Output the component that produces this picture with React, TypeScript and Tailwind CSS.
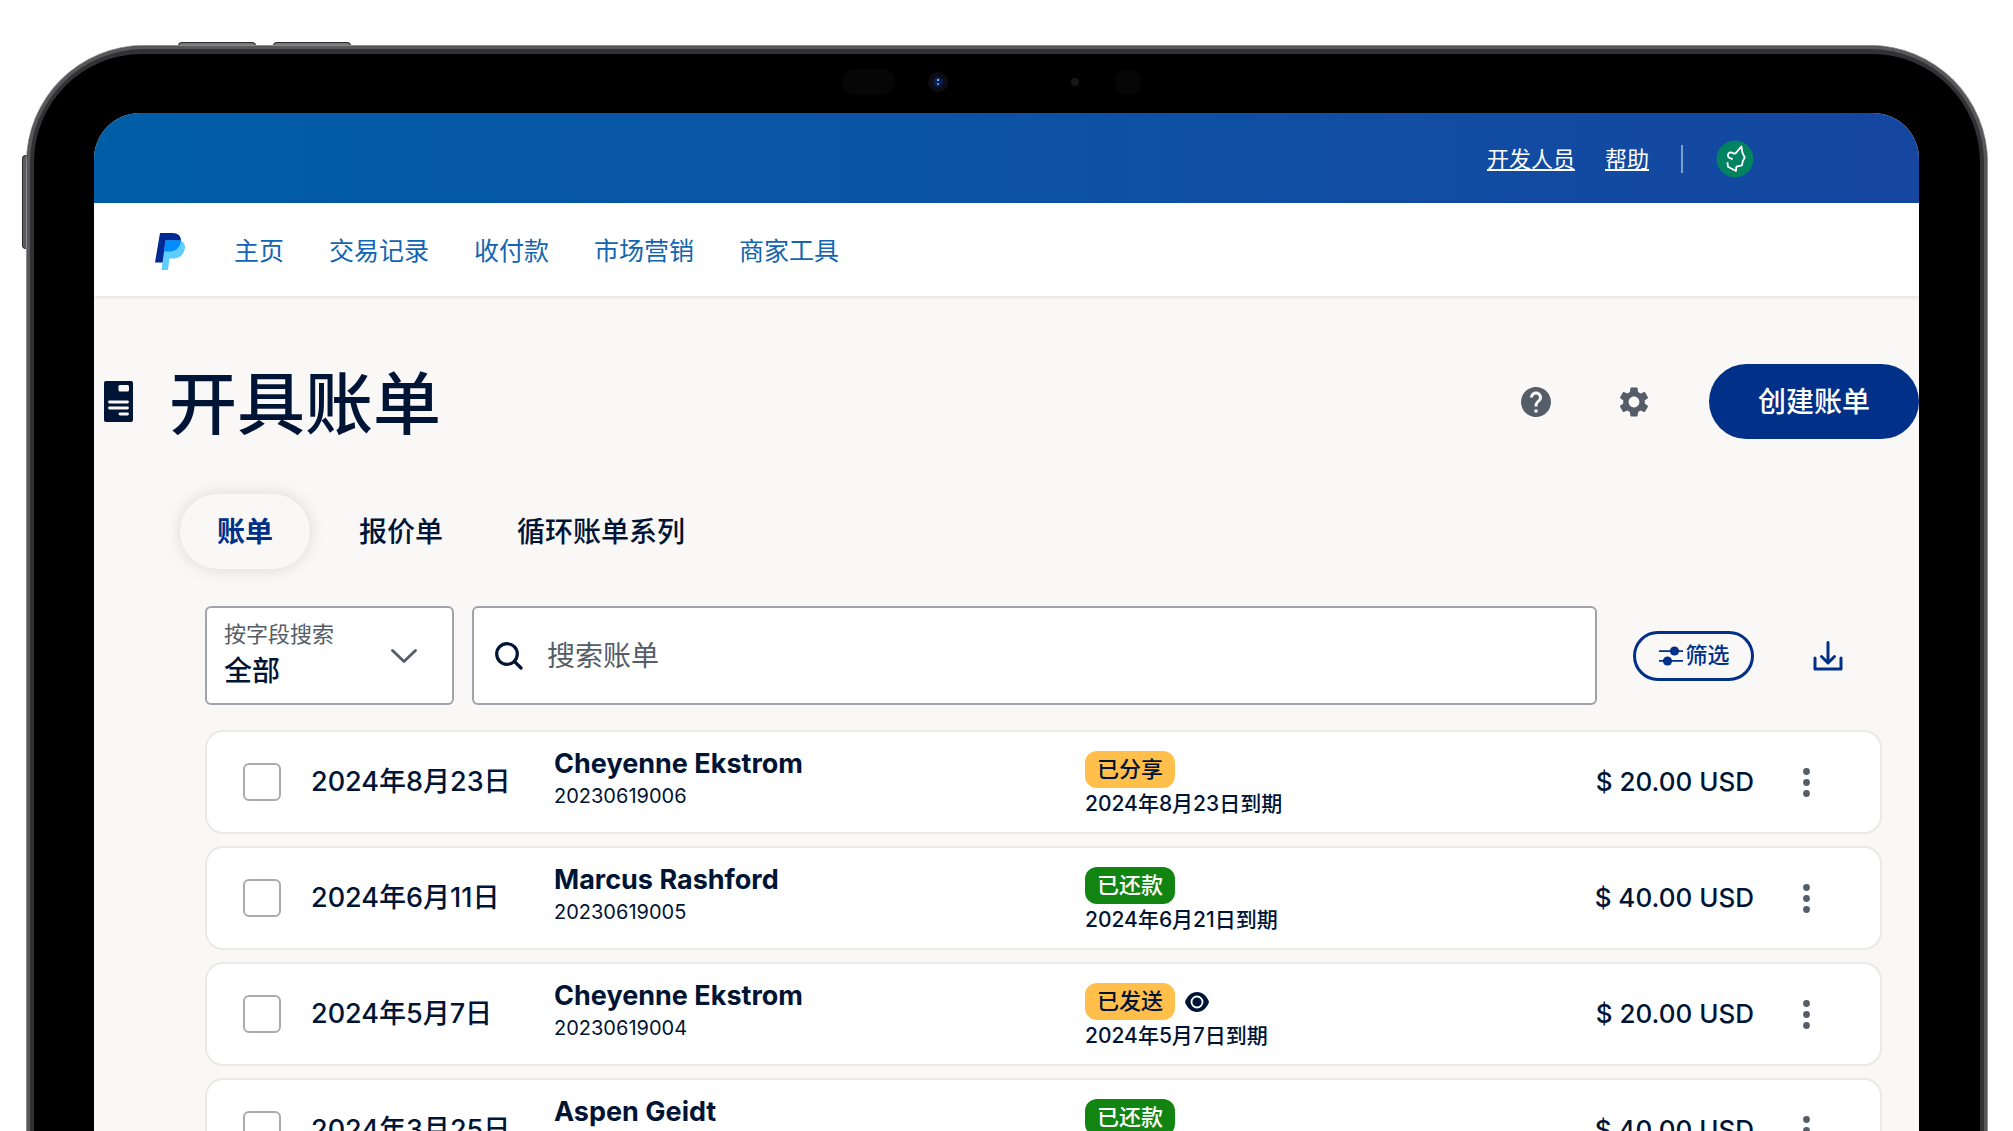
import { useState } from 'react';
import { MdHelp, MdSettings } from 'react-icons/md';

interface Invoice {
  date: string;
  name: string;
  number?: string;
  status: '已分享' | '已还款' | '已发送';
  due?: string;
  viewed?: boolean;
  amount: string;
}

const NAV_ITEMS = ['主页', '交易记录', '收付款', '市场营销', '商家工具'];
const TABS = ['账单', '报价单', '循环账单系列'];

const INVOICES: Invoice[] = [
  { date: '2024年8月23日', name: 'Cheyenne Ekstrom', number: '20230619006', status: '已分享', due: '2024年8月23日到期', amount: '$ 20.00 USD' },
  { date: '2024年6月11日', name: 'Marcus Rashford', number: '20230619005', status: '已还款', due: '2024年6月21日到期', amount: '$ 40.00 USD' },
  { date: '2024年5月7日', name: 'Cheyenne Ekstrom', number: '20230619004', status: '已发送', due: '2024年5月7日到期', viewed: true, amount: '$ 20.00 USD' },
  { date: '2024年3月25日', name: 'Aspen Geidt', status: '已还款', amount: '$ 40.00 USD' },
];

function PayPalLogo() {
  return (
    <svg viewBox="0 0 30 37" className="w-[30px] h-[37px]" aria-hidden="true">
      <path d="M5 0h12.500C23 0 26 3 26 7.500 25.500 14 21 18.500 14.500 18.500H10L8.500 29.500H0z" fill="#002991" />
      <path d="M10.500 7.500h12.500c4.500 0 7 2.700 7 6.500-.5 7-5 11.500-11.500 11.500h-4L13 37H6.500z" fill="#60cdff" />
      <path d="M10.500 7.500H26C25.500 14 21 18.500 14.500 18.500H9z" fill="#008cff" />
    </svg>
  );
}

function Avatar() {
  return (
    <svg viewBox="0 0 38 38" className="w-[38px] h-[38px]" aria-hidden="true">
      <circle cx="19" cy="19" r="18.500" fill="#018362" />
      <path
        d="M16.500 19.500L15.500 18.500C13 18.500 11.500 16.500 12 14.500c.5-1.800 2.500-2.400 4-1.800 1.500.9 2.400 1 3.500.6L25.400 6.500l1 6.200 2.300 4.800-2 3.800-.7 4-5.600 1.400-.4 4.300-8-4.300-.6-4.500"
        fill="none"
        stroke="#fff"
        strokeWidth="1.800"
        strokeLinejoin="round"
      />
    </svg>
  );
}

function InvoiceIcon() {
  return (
    <svg viewBox="0 0 29 41" className="w-[29px] h-[41px]" aria-hidden="true">
      <rect width="29" height="41" rx="2" fill="#001435" />
      <rect x="14.500" y="4" width="10.500" height="6.500" rx="1.500" fill="#faf8f5" />
      <path d="M5.500 21h18M5.500 27h18M16 33h7.500" stroke="#faf8f5" strokeWidth="2.800" strokeLinecap="round" />
    </svg>
  );
}

function StatusBadge({ status }: { status: Invoice['status'] }) {
  const color = status === '已还款' ? 'bg-[#118412] text-white' : 'bg-[#ffbf4a] text-[#001435]';
  return <span className={`inline-flex items-center h-[37px] px-3 rounded-xl text-[22px] font-medium ${color}`}>{status}</span>;
}

/** 平板外框：边框、侧键与前置摄像头 */
function Device({ children }: { children: React.ReactNode }) {
  return (
    <div className="relative flex-1 flex flex-col min-h-0 mt-[45px] ml-[26px] mr-[25px]">
      <div className="absolute -top-[3px] left-[152px] w-[78px] h-2 rounded-t-sm bg-[#77777a] border-t border-x border-[#2d2d2f]" />
      <div className="absolute -top-[3px] left-[247px] w-[78px] h-2 rounded-t-sm bg-[#77777a] border-t border-x border-[#2d2d2f]" />
      <div className="absolute top-[110px] -left-1 w-2 h-[94px] rounded-l-sm bg-[#5d5d60] border-y border-l border-[#2d2d2f]" />
      <div className="relative flex-1 flex flex-col min-h-0 rounded-t-[118px] border-t border-x border-[#8b8d8c] bg-[#333134]">
        <div className="flex-1 flex flex-col min-h-0 rounded-t-[117px] border-t-[3px] border-x-[3px] border-[#58585a]">
          <div className="flex-1 flex flex-col min-h-0 mt-[5px] mx-1 pl-[60px] pr-[61px] rounded-t-[108px] bg-black">
            <div className="flex items-center justify-center h-[59px] pb-1">
              <div className="w-[53px] h-[26px] rounded-full bg-[#060606]" />
              <div className="ml-[33px] flex items-center justify-center size-5 rounded-full bg-[#0d0c14]">
                <div className="flex flex-col items-center justify-center gap-0.5 size-2.5 rounded-full bg-[#0b1f4d]">
                  <span className="size-0.5 bg-[#7fb2ff]" />
                  <span className="size-0.5 bg-[#4c8df0]" />
                </div>
              </div>
              <div className="ml-[123px] size-2 rounded-full bg-[#17171a]" />
              <div className="ml-9 mr-[30px] size-[26px] rounded-full bg-[#060606]" />
            </div>
            {children}
          </div>
        </div>
      </div>
    </div>
  );
}

function InvoiceRow({ invoice, index }: { invoice: Invoice; index: number }) {
  const cell = 'h-[104px] p-0 bg-white border-y-2 border-[#e9e9e8]';
  return (
    <tr>
      <td className={`${cell} border-l-2 rounded-l-[18px] pl-9`}>
        <input
          type="checkbox"
          aria-label={`选择账单 ${index + 1}`}
          className="block size-[38px] appearance-none rounded-md border-2 border-[#a9abae] bg-white checked:bg-[#003087]"
        />
      </td>
      <td className={`${cell} text-[27px] leading-9 font-medium whitespace-nowrap`}>{invoice.date}</td>
      <td className={`${cell} align-top`}>
        <div className="mt-3.5 text-[27px] leading-9 font-bold">{invoice.name}</div>
        <div className="text-[20px] leading-7">{invoice.number}</div>
      </td>
      <td className={`${cell} align-top`}>
        <div className="mt-[19px] flex items-center gap-2.5">
          <StatusBadge status={invoice.status} />
          {invoice.viewed && (
            <svg viewBox="0 0 24 20" className="w-6 h-5" role="img" aria-label="已查看">
              <path d="M12 0c5.500 0 10 4 12 10-2 6-6.500 10-12 10S2 16 0 10C2 4 6.500 0 12 0z" fill="#001435" />
              <circle cx="12" cy="10" r="5.500" fill="none" stroke="#fff" strokeWidth="1.800" />
            </svg>
          )}
        </div>
        <div className="text-[21px] leading-8 font-medium">{invoice.due}</div>
      </td>
      <td className={`${cell} text-right text-[26px] leading-9 font-medium whitespace-nowrap`}>{invoice.amount}</td>
      <td className={`${cell} border-r-2 rounded-r-[18px] pl-8`}>
        <button type="button" aria-label="更多操作" className="flex w-10 h-12 items-center justify-center">
          <svg viewBox="0 0 7 29" className="w-[7px] h-[29px]" fill="#545d68">
            <circle cx="3.500" cy="3.500" r="3.400" />
            <circle cx="3.500" cy="14.500" r="3.400" />
            <circle cx="3.500" cy="25.500" r="3.400" />
          </svg>
        </button>
      </td>
    </tr>
  );
}

export default function App() {
  const [activeTab, setActiveTab] = useState(TABS[0]);

  return (
    <div className="h-screen flex flex-col overflow-hidden bg-white text-[#001435] font-['Inter','Noto_Sans_CJK_SC',sans-serif]">
      <Device>
        <div className="flex-1 min-h-0 overflow-hidden rounded-t-[46px] bg-[#faf8f6]">
          {/* 顶部工具条 */}
          <header className="flex items-center justify-end h-[90px] pt-0.5 pr-[165px] bg-linear-to-r from-[#005ea6] to-[#1546a0] text-white text-[22px]">
            <a href="#developer" className="underline underline-offset-2">开发人员</a>
            <a href="#help" className="ml-[30px] underline underline-offset-2">帮助</a>
            <span className="ml-8 mr-[33px] w-0.5 h-7 bg-white/45" />
            <Avatar />
          </header>

          {/* 主导航 */}
          <nav className="relative flex items-center h-[93px] pt-1 pl-[61px] bg-white shadow-[0_1px_4px_rgba(0,0,0,0.12)]">
            <a href="#home" aria-label="PayPal"><PayPalLogo /></a>
            <div className="ml-[49px] flex gap-[45px] text-[25px] text-[#1265b0]">
              {NAV_ITEMS.map((item) => (
                <a key={item} href={`#${item}`}>{item}</a>
              ))}
            </div>
          </nav>

          <main>
            <div className="mt-[68px] flex items-center h-[75px] pl-2.5">
              <InvoiceIcon />
              <h1 className="ml-9 pt-1 text-[68px] leading-[76px] font-medium">开具账单</h1>
              <div className="ml-auto flex items-center">
                <button type="button" aria-label="帮助" className="text-[#545d68]"><MdHelp className="size-9" /></button>
                <button type="button" aria-label="设置" className="ml-[62px] text-[#545d68]"><MdSettings className="size-9" /></button>
                <button type="button" className="ml-[57px] h-[75px] px-[49px] rounded-full bg-[#003087] text-white text-[28px] font-medium">
                  创建账单
                </button>
              </div>
            </div>

            <div role="tablist" className="mt-[55px] ml-[86px] flex text-[28px]">
              {TABS.map((tab) => (
                <button
                  key={tab}
                  type="button"
                  role="tab"
                  aria-selected={tab === activeTab}
                  onClick={() => setActiveTab(tab)}
                  className={`h-[75px] px-[37px] rounded-full ${
                    tab === activeTab ? 'mr-3 font-bold text-[#003087] shadow-[0_0_16px_rgba(0,0,0,0.13)]' : 'font-medium'
                  }`}
                >
                  {tab}
                </button>
              ))}
            </div>

            <div className="mt-[37px] ml-[111px] mr-[37px]">
              <div className="flex items-center">
                <div className="flex items-center w-[249px] h-[99px] pl-[17px] pr-[35px] rounded-md border-2 border-[#a0a3a7] bg-white">
                  <div className="flex-1">
                    <label htmlFor="field" className="block text-[22px] leading-[30px] text-[#545d68] whitespace-nowrap">按字段搜索</label>
                    <select id="field" className="block w-full h-11 appearance-none text-[28px] leading-10 font-medium bg-transparent">
                      <option>全部</option>
                    </select>
                  </div>
                  <svg viewBox="0 0 26 14" className="w-[26px] h-3.5" fill="none" stroke="#545d68" strokeWidth="2.800" strokeLinecap="round" strokeLinejoin="round">
                    <path d="M1.500 1.500L13 12.500 24.500 1.500" />
                  </svg>
                </div>
                <div className="ml-[18px] flex-1 flex items-center h-[99px] pl-[21px] rounded-md border-2 border-[#a0a3a7] bg-white">
                  <svg viewBox="0 0 28 28" className="size-7" fill="none" stroke="#001435" strokeWidth="3.200" strokeLinecap="round">
                    <circle cx="12" cy="12" r="10.300" />
                    <path d="M19.500 19.500L26 26" />
                  </svg>
                  <input
                    type="text"
                    aria-label="搜索账单"
                    placeholder="搜索账单"
                    className="ml-6 flex-1 h-20 text-[28px] bg-transparent outline-none placeholder:text-[#545d68]"
                  />
                </div>
                <button type="button" className="ml-9 flex items-center justify-center gap-0.5 w-[121px] h-[50px] pl-0.5 rounded-full border-3 border-[#003087] text-[#003087] text-[22px] font-medium">
                  <svg viewBox="0 0 24 20" className="w-6 h-5" fill="#003087">
                    <path d="M0 4.200h24v1.800H0zM0 14h24v1.800H0z" />
                    <circle cx="15.500" cy="5" r="4.600" />
                    <circle cx="8.500" cy="15" r="4.600" />
                  </svg>
                  筛选
                </button>
                <button type="button" aria-label="下载" className="ml-[59px] mr-[39px]">
                  <svg viewBox="0 0 30 30" className="size-[30px]" fill="none" stroke="#003087" strokeWidth="3" strokeLinecap="round" strokeLinejoin="round">
                    <path d="M15 1.500v20M8.500 15.500L15 22 21.500 15.500M2 17V28h26V17" />
                  </svg>
                </button>
              </div>

              <table className="mt-[13px] w-full table-fixed border-separate border-spacing-x-0 border-spacing-y-3">
                <colgroup>
                  <col className="w-[106px]" />
                  <col className="w-[243px]" />
                  <col className="w-[531px]" />
                  <col />
                  <col className="w-[240px]" />
                  <col className="w-[128px]" />
                </colgroup>
                <tbody>
                  {INVOICES.map((invoice, i) => (
                    <InvoiceRow key={i} invoice={invoice} index={i} />
                  ))}
                </tbody>
              </table>
            </div>
          </main>
        </div>
      </Device>
    </div>
  );
}
